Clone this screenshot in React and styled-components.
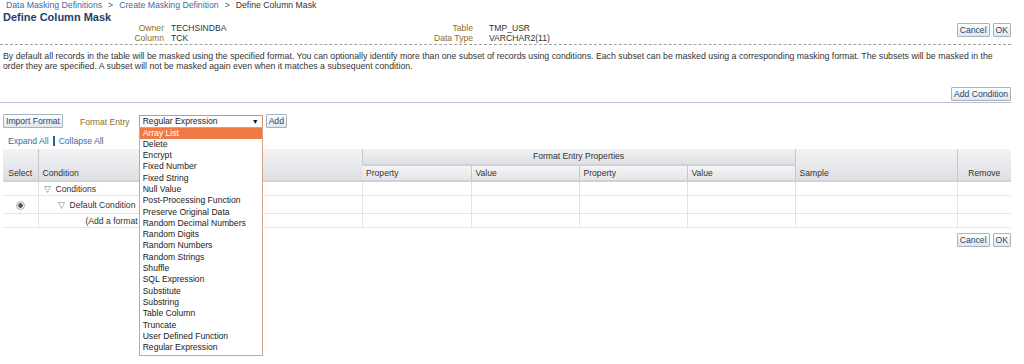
import React from 'react';
import styled, { createGlobalStyle } from 'styled-components';

const GlobalStyle = createGlobalStyle`
  html, body {
    margin: 0;
    padding: 0;
    background: #ffffff;
    font-family: 'Liberation Sans', Arial, sans-serif;
    color: #333333;
  }
`;

const formatOptions = [
  'Array List',
  'Delete',
  'Encrypt',
  'Fixed Number',
  'Fixed String',
  'Null Value',
  'Post-Processing Function',
  'Preserve Original Data',
  'Random Decimal Numbers',
  'Random Digits',
  'Random Numbers',
  'Random Strings',
  'Shuffle',
  'SQL Expression',
  'Substitute',
  'Substring',
  'Table Column',
  'Truncate',
  'User Defined Function',
  'Regular Expression',
];

const propCols = ['Property', 'Value', 'Property', 'Value'];

const App = () => {
  return (
    <Page>
      <GlobalStyle />
      <Breadcrumbs>
        <Crumb>Data Masking Definitions</Crumb>
        <Sep>&gt;</Sep>
        <Crumb>Create Masking Definition</Crumb>
        <Sep>&gt;</Sep>
        <Current>Define Column Mask</Current>
      </Breadcrumbs>
      <Title>Define Column Mask</Title>
      <InfoRow>
        <InfoGrid labelWidth={164} gap={7} width={352}>
          <Label>Owner</Label>
          <Value>TECHSINDBA</Value>
          <Label>Column</Label>
          <Value>TCK</Value>
        </InfoGrid>
        <InfoGrid labelWidth={121} gap={16} width={300}>
          <Label>Table</Label>
          <Value>TMP_USR</Value>
          <Label>Data Type</Label>
          <Value>VARCHAR2(11)</Value>
        </InfoGrid>
        <ButtonGroup>
          <Button>Cancel</Button>
          <Button>OK</Button>
        </ButtonGroup>
      </InfoRow>
      <DashedRule />
      <Description>
        By default all records in the table will be masked using the specified format. You can
        optionally identify more than one subset of records using conditions. Each subset can be
        masked using a corresponding masking format. The subsets will be masked in the order they
        are specified. A subset will not be masked again even when it matches a subsequent
        condition.
      </Description>
      <ConditionBar>
        <Button>Add Condition</Button>
      </ConditionBar>
      <Toolbar>
        <Button>Import Format</Button>
        <ToolLabel>Format Entry</ToolLabel>
        <SelectWrap>
          <Select>
            <span>Regular Expression</span>
            <Arrow>▼</Arrow>
          </Select>
          <OptionList>
            {formatOptions.map((opt, idx) => (
              <Option key={`opt-${opt}`} active={idx === 0}>
                {opt}
              </Option>
            ))}
          </OptionList>
        </SelectWrap>
        <Button>Add</Button>
      </Toolbar>
      <TreeLinks>
        <TreeLink>Expand All</TreeLink>
        <Divider />
        <TreeLink>Collapse All</TreeLink>
      </TreeLinks>
      <Grid>
        <colgroup>
          <col style={{ width: 35 }} />
          <col style={{ width: 324 }} />
          <col style={{ width: 109 }} />
          <col style={{ width: 108 }} />
          <col style={{ width: 108 }} />
          <col style={{ width: 108 }} />
          <col style={{ width: 162 }} />
          <col style={{ width: 54 }} />
        </colgroup>
        <thead>
          <tr>
            <Th rowSpan={2} align="center">Select</Th>
            <Th rowSpan={2}>Condition</Th>
            <Th colSpan={4} align="center" group>Format Entry Properties</Th>
            <Th rowSpan={2}>Sample</Th>
            <Th rowSpan={2} align="center">Remove</Th>
          </tr>
          <tr>
            {propCols.map((c, idx) => (
              <Th key={`pc-${idx}`} sub>{c}</Th>
            ))}
          </tr>
        </thead>
        <tbody>
          <tr>
            <Td />
            <Td>
              <TreeCell indent={5}>
                <Twisty>▽</Twisty>Conditions
              </TreeCell>
            </Td>
            {[0, 1, 2, 3, 4, 5].map(i => (
              <Td key={`a-${i}`} />
            ))}
          </tr>
          <tr>
            <Td align="center" tall>
              <Radio />
            </Td>
            <Td tall>
              <TreeCell indent={19}>
                <Twisty>▽</Twisty>Default Condition
              </TreeCell>
            </Td>
            {[0, 1, 2, 3, 4, 5].map(i => (
              <Td key={`b-${i}`} tall />
            ))}
          </tr>
          <tr>
            <Td />
            <Td>
              <TreeCell indent={47}>(Add a format</TreeCell>
            </Td>
            {[0, 1, 2, 3, 4, 5].map(i => (
              <Td key={`c-${i}`} />
            ))}
          </tr>
        </tbody>
      </Grid>
      <FooterButtons>
        <Button>Cancel</Button>
        <Button>OK</Button>
      </FooterButtons>
    </Page>
  );
};

const Page = styled.div`
  width: 1024px;
  height: 364px;
  overflow: hidden;
  position: relative;
  font-size: 8.6px;
`;

const Breadcrumbs = styled.div`
  display: flex;
  gap: 6px;
  padding: 0 0 0 6px;
  height: 11px;
  line-height: 11px;
  font-size: 8.7px;
`;

const Crumb = styled.span`
  color: #3d6aa3;
`;

const Sep = styled.span`
  color: #555;
`;

const Current = styled.span`
  color: #333;
`;

const Title = styled.h1`
  margin: 0;
  padding-left: 3px;
  font-size: 11px;
  line-height: 12px;
  font-weight: bold;
  color: #1c3e6b;
`;

const InfoRow = styled.div`
  display: flex;
  align-items: flex-start;
  height: 20px;
  padding-top: 1px;
`;

const InfoGrid = styled.div`
  display: grid;
  grid-template-columns: ${({ labelWidth }) => labelWidth}px auto;
  column-gap: ${({ gap }) => gap}px;
  line-height: 9.5px;
  font-size: 8.6px;
  width: ${({ width }) => width}px;
`;

const Label = styled.span`
  text-align: right;
  color: #8c6d2c;
`;

const Value = styled.span`
  color: #333;
`;

const ButtonGroup = styled.div`
  display: flex;
  gap: 3px;
  margin-left: auto;
  margin-right: 13px;
  margin-top: -1px;
`;

const Button = styled.button`
  font-family: 'Liberation Sans', Arial, sans-serif;
  font-size: 8.6px;
  line-height: 11px;
  height: 14px;
  padding: 0 2px;
  color: #24466e;
  background: linear-gradient(#ffffff, #e2e6ec);
  border: 1px solid #a7b1bf;
  border-radius: 1px;
  cursor: pointer;
`;

const DashedRule = styled.div`
  margin: 0 13px 0 0;
  border-top: 1px dashed #a0a0a0;
`;

const Description = styled.p`
  margin: 7px 0 0;
  padding: 0 24px 0 3px;
  height: 35px;
  font-size: 8.75px;
  line-height: 9.5px;
  color: #333;
`;

const ConditionBar = styled.div`
  display: flex;
  justify-content: flex-end;
  padding: 0 0 1px 0;
  border-bottom: 1px solid #b8c4d6;
  margin-right: 13px;
`;

const Toolbar = styled.div`
  display: flex;
  align-items: center;
  padding: 11px 0 0 3px;
  height: 14px;
`;

const ToolLabel = styled.span`
  color: #8c6d2c;
  margin: 0 9px 0 17px;
  padding-top: 1px;
`;

const SelectWrap = styled.div`
  position: relative;
  margin-right: 3px;
`;

const Select = styled.div`
  height: 11px;
  border: 1px solid #e8896a;
  display: flex;
  align-items: center;
  justify-content: space-between;
  padding: 0 3px;
  box-sizing: content-box;
  width: 116px;
  font-size: 8.6px;
  color: #222;
  background: #fff;
`;

const Arrow = styled.span`
  font-size: 7px;
  color: #111;
`;

const OptionList = styled.ul`
  position: absolute;
  top: 12px;
  left: 0;
  width: 122px;
  margin: 0;
  padding: 0 0 2px;
  list-style: none;
  background: #fff;
  border: 1px solid #d9a08c;
  z-index: 5;
`;

const Option = styled.li`
  height: 11.3px;
  line-height: 11.3px;
  padding: 0 3px;
  font-size: 8.6px;
  color: ${({ active }) => (active ? '#ffffff' : '#222')};
  background: ${({ active }) => (active ? '#f07a46' : 'transparent')};
`;

const TreeLinks = styled.div`
  display: flex;
  align-items: center;
  gap: 4px;
  padding: 7px 0 0 8px;
  height: 12px;
`;

const TreeLink = styled.span`
  color: #3d6aa3;
`;

const Divider = styled.span`
  width: 2px;
  height: 10px;
  background: #2d5b96;
`;

const Grid = styled.table`
  margin: 2px 0 0 3px;
  width: 1008px;
  border-collapse: collapse;
  table-layout: fixed;
  font-size: 8.6px;
`;

const Th = styled.th`
  font-weight: normal;
  color: #333;
  text-align: ${({ align }) => align || 'left'};
  vertical-align: ${({ group }) => (group ? 'middle' : 'bottom')};
  height: 16px;
  line-height: 11px;
  padding: 0 4px 1px;
  box-sizing: border-box;
  background: ${({ sub }) =>
    sub ? 'linear-gradient(#f4f4f6, #e4e5e8)' : 'linear-gradient(#f3f3f5, #dedfe3)'};
  border-left: 1px solid #c5c7cc;
  border-bottom: 2px solid #cfd1d6;
  &:first-child {
    border-left: none;
  }
`;

const Td = styled.td`
  height: ${({ tall }) => (tall ? '17px' : '13px')};
  padding: 0;
  border-left: 1px solid #e2e2e2;
  border-bottom: 1px solid #e6e6e6;
  text-align: ${({ align }) => align || 'left'};
  color: #333;
  &:first-child {
    border-left: none;
  }
`;

const TreeCell = styled.div`
  padding-left: ${({ indent }) => indent}px;
  display: flex;
  align-items: center;
  white-space: nowrap;
`;

const Twisty = styled.span`
  font-size: 9px;
  color: #777;
  margin-right: 5px;
`;

const Radio = styled.span`
  display: inline-block;
  width: 7px;
  height: 7px;
  border-radius: 50%;
  border: 1px solid #b5b5b5;
  background: radial-gradient(circle, #555 0 2px, #eee 2.5px);
  vertical-align: middle;
`;

const FooterButtons = styled.div`
  display: flex;
  justify-content: flex-end;
  gap: 3px;
  padding: 5px 13px 0 0;
`;

export default App;
